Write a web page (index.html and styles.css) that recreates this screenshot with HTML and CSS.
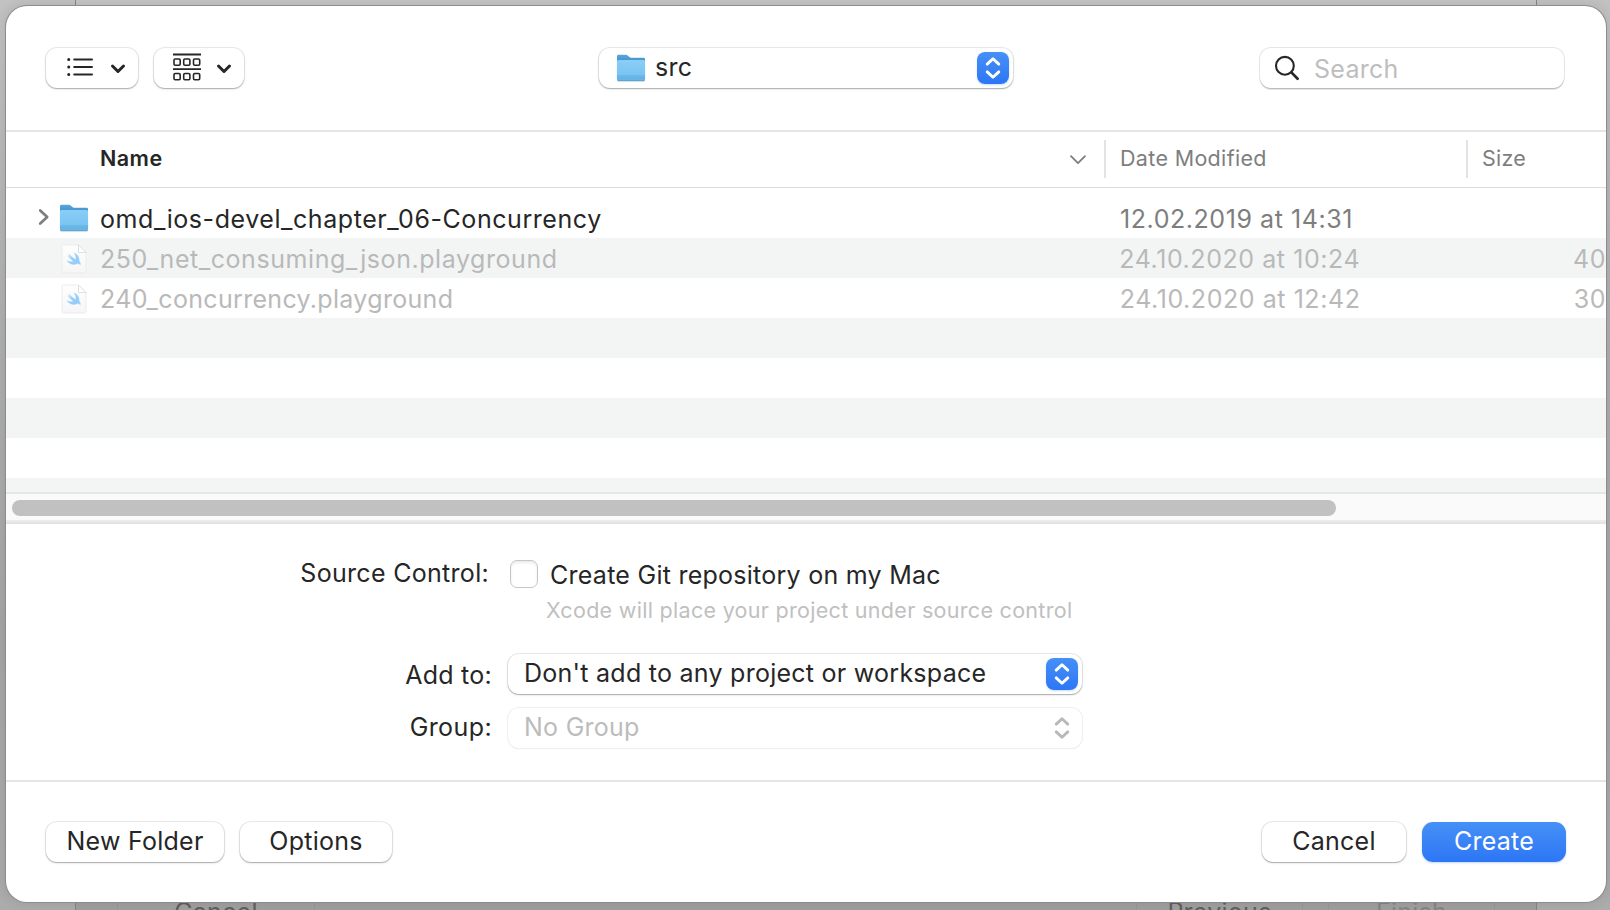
FILE: index.html
```
<!DOCTYPE html>
<html lang="en">
<head>
<meta charset="utf-8">
<title>Save</title>
<link rel="stylesheet" href="styles.css">
</head>
<body>
<svg class="defs" width="0" height="0" aria-hidden="true">
  <defs>
    <linearGradient id="folder-back" x1="0" y1="0" x2="0" y2="1"><stop offset="0" stop-color="#58a7db"/><stop offset=".3" stop-color="#3f8fc9"/></linearGradient>
    <linearGradient id="folder-front" x1="0" y1="0" x2="0" y2="1"><stop offset="0" stop-color="#8acdf7"/><stop offset=".7" stop-color="#7ac4f3"/><stop offset="1" stop-color="#66b3e4"/></linearGradient>
    <linearGradient id="page" x1="0" y1="0" x2="0" y2="1"><stop offset="0" stop-color="#fefefe"/><stop offset="1" stop-color="#f6f6f6"/></linearGradient>
  </defs>
  <symbol id="folder" viewBox="0 0 30 28">
    <path d="M1 26V2.200Q1 .8 2.400 .8H10q1 0 1.600.7l1.800 1.600q.6.6 1.600.6h12.600q1.400 0 1.400 1.400V26z" fill="url(#folder-back)"/>
    <path d="M.9 7.600Q.9 6 2.400 6H27.600q1.500 0 1.500 1.600V25.200q0 1.500-1.500 1.500H2.400q-1.500 0-1.500-1.500z" fill="url(#folder-front)"/>
    <path d="M1 22H29M1 24H29" stroke="#5aa9da" stroke-width=".7"/>
    <path d="M1.500 26.800H28.500" stroke="#4b8fbd" stroke-width=".9"/>
  </symbol>
  <symbol id="playground" viewBox="0 0 26 30">
    <path d="M1.500 1H17.500L25 8.500V27.500q0 1.500-1.500 1.500H2.500Q1 29 1 27.500V1.500z" fill="url(#page)" stroke="#e9e9e9" stroke-width=".8"/>
    <path d="M17.500 1V8.500H25z" fill="#fff" stroke="#dcdcdc" stroke-width=".9"/>
    <path d="M13.200 8.800C17 11 18.700 14 18 17.100C19.300 18.500 19.600 19.800 19.200 20.700C18 19.300 16.900 19.500 15.500 20C12 21.100 8.300 19.900 6 16.700C8.300 18 10.800 18.100 12.600 17.300C10.200 15.600 8.100 13.400 6.900 11.500C8.600 13 10 14 11.500 15C10.200 13.500 9 12 8.100 10.300C10 12.200 12.600 14.500 14.800 15.700C15.400 13.500 14.700 11 13.200 8.800z" fill="#94cdfa" stroke="#94cdfa" stroke-width=".4" stroke-linejoin="round"/>
  </symbol>
  <symbol id="chevron-down" viewBox="0 0 16 12">
    <path d="M2.500 3L8 8.500 13.500 3" fill="none" stroke="currentColor" stroke-width="3" stroke-linecap="round" stroke-linejoin="round"/>
  </symbol>
  <symbol id="updown" viewBox="0 0 16 24">
    <path d="M2.200 8.100L8 2.800l5.800 5.300M2.200 15.900L8 21.200l5.800-5.300" fill="none" stroke="currentColor" stroke-width="2.900" stroke-linecap="round" stroke-linejoin="round"/>
  </symbol>
</svg>

<div class="parent-window">
  <div class="parent-buttons">
    <span class="parent-button parent-cancel">Cancel</span>
    <span class="parent-button">Previous</span>
    <span class="parent-button parent-finish">Finish</span>
  </div>
</div>

<main class="dialog">
  <header class="toolbar">
    <button class="control view-list">
      <svg width="26" height="22" viewBox="0 0 26 22" fill="none" stroke="currentColor" stroke-width="2" stroke-linecap="round"><path d="M7.200 3.500H25M7.200 11H25M7.200 18.500H25"/><path d="M1.700 3.500h.1M1.700 11h.1M1.700 18.500h.1" stroke-width="3"/></svg>
      <svg class="chev" width="16" height="12"><use href="#chevron-down"/></svg>
    </button>
    <button class="control view-group">
      <svg width="28" height="28" viewBox="0 0 28 28" fill="none" stroke="currentColor" stroke-width="1.600"><path d="M0 1.500H28M0 16.200H28" stroke-width="1.800"/><rect x="1" y="6" width="6.200" height="6.200" rx="1.200"/><rect x="10.700" y="6" width="6.200" height="6.200" rx="1.200"/><rect x="20.500" y="6" width="6.200" height="6.200" rx="1.200"/><rect x="1" y="20.500" width="6.200" height="6.200" rx="1.200"/><rect x="10.700" y="20.500" width="6.200" height="6.200" rx="1.200"/><rect x="20.500" y="20.500" width="6.200" height="6.200" rx="1.200"/></svg>
      <svg class="chev" width="16" height="12"><use href="#chevron-down"/></svg>
    </button>
    <div class="control location">
      <svg width="30" height="28"><use href="#folder"/></svg>
      <span class="location-name">src</span>
      <span class="stepper"><svg width="16" height="24"><use href="#updown"/></svg></span>
    </div>
    <div class="control search">
      <svg width="26" height="28" viewBox="0 0 26 28" fill="none" stroke="currentColor" stroke-linecap="round"><circle cx="10.900" cy="11.800" r="8.900" stroke-width="2.100"/><path d="M17.600 18.600L23.600 24.800" stroke-width="2.700"/></svg>
      <span>Search</span>
    </div>
  </header>

  <div class="columns">
    <div class="col-name"><span>Name</span>
      <svg width="18" height="12" viewBox="0 0 18 12"><path d="M2 2.200L9 9.200 16 2.200" fill="none" stroke="#7d7d7d" stroke-width="1.800" stroke-linecap="round" stroke-linejoin="round"/></svg>
    </div>
    <div class="col-date">Date Modified</div>
    <div class="col-size">Size</div>
  </div>

  <div class="files">
    <div class="row">
      <svg class="disclosure" width="12" height="20" viewBox="0 0 12 20"><path d="M2.200 3.400L9.200 10 2.200 16.600" fill="none" stroke="#7e7e7e" stroke-width="2.700" stroke-linecap="round" stroke-linejoin="round"/></svg>
      <svg class="file-icon" width="30" height="28"><use href="#folder"/></svg>
      <span class="file-name">omd_ios-devel_chapter_06-Concurrency</span>
      <span class="file-date">12.02.2019 at 14:31</span>
    </div>
    <div class="row disabled">
      <svg class="page-icon" width="26" height="30"><use href="#playground"/></svg>
      <span class="file-name">250_net_consuming_json.playground</span>
      <span class="file-date">24.10.2020 at 10:24</span>
      <span class="file-size">40</span>
    </div>
    <div class="row disabled">
      <svg class="page-icon" width="26" height="30"><use href="#playground"/></svg>
      <span class="file-name short-name">240_concurrency.playground</span>
      <span class="file-date">24.10.2020 at 12:42</span>
      <span class="file-size">30</span>
    </div>
    <div class="row"></div>
    <div class="row"></div>
    <div class="row"></div>
    <div class="row"></div>
    <div class="row"></div>
  </div>
  <div class="scrollbar"><div class="thumb"></div></div>

  <section class="options">
    <div class="option source">
      <span class="label">Source Control:</span>
      <span class="checkbox"></span>
      <span class="check-text">Create Git repository on my Mac</span>
    </div>
    <p class="note">Xcode will place your project under source control</p>
    <div class="option">
      <span class="label">Add to:</span>
      <div class="control select"><span>Don't add to any project or workspace</span><span class="stepper"><svg width="16" height="24"><use href="#updown"/></svg></span></div>
    </div>
    <div class="option">
      <span class="label group-label">Group:</span>
      <div class="control select off"><span>No Group</span><span class="stepper"><svg width="16" height="24"><use href="#updown"/></svg></span></div>
    </div>
  </section>

  <footer class="actions">
    <button class="control new-folder">New Folder</button>
    <button class="control more">Options</button>
    <button class="control cancel">Cancel</button>
    <button class="control create">Create</button>
  </footer>
</main>
</body>
</html>
```
FILE: styles.css
```
* { box-sizing: border-box; }

body {
  margin: 0;
  width: 1610px;
  height: 910px;
  padding: 6px 4px 8px 6px;
  overflow: hidden;
  position: relative;
  background: linear-gradient(#c2c2c2, #b0b0b0 35%, #a6a6a6 70%, #acacac);
  color: #262626;
  font: 25px/30px Inter, "Liberation Sans", sans-serif;
  letter-spacing: .26px;
}

.defs { position: absolute; }
svg { display: block; flex: none; }

.parent-window {
  position: absolute;
  left: 75px;
  top: -10px;
  width: 1462px;
  height: 940px;
  padding-top: 908px;
  border: solid #858585;
  border-width: 0 1px;
  background: linear-gradient(#c5c5c5 16px, #a0a0a0 900px);
}
.parent-buttons { display: flex; padding: 0 41px; }
.parent-button {
  width: 167px;
  height: 30px;
  margin-left: 25px;
  border: solid #979797;
  border-width: 0 1px;
  color: #606060;
  text-align: center;
  line-height: 29px;
}
.parent-cancel { width: 198px; margin: 0 auto 0 0; }
.parent-finish { color: #868686; }

.dialog {
  position: relative;
  display: flex;
  flex-direction: column;
  width: 1600px;
  height: 896px;
  overflow: hidden;
  border-radius: 21px;
  background: #fff;
  box-shadow: 0 0 0 1px #8c8c8c, 0 0 14px rgba(0, 0, 0, .12);
}

.control {
  display: flex;
  align-items: center;
  height: 40px;
  padding: 0;
  border: 0;
  border-radius: 11px;
  background: #fff;
  color: #262626;
  font: inherit;
  letter-spacing: inherit;
  box-shadow: 0 0 0 1px rgba(0, 0, 0, .08), 0 1px 1px rgba(0, 0, 0, .18), 0 1px 3px rgba(0, 0, 0, .12);
}

.toolbar {
  display: flex;
  height: 126px;
  padding: 42px 42px 0 40px;
  border-bottom: 2px solid #e5e5e5;
}
.view-list { width: 92px; padding: 0 12px 3px 21px; justify-content: space-between; }
.view-group { width: 90px; margin-left: 16px; padding: 0 12px 3px 19px; justify-content: space-between; }
.chev { margin-top: 4px; }
.location { width: 414px; margin-left: 355px; padding: 0 4px 0 17px; }
.location-name { margin: -3px auto 0 9px; }
.search {
  width: 304px;
  margin-left: auto;
  padding-left: 14px;
  gap: 14px;
  box-shadow: 0 1px 0 0 #bdbdbd, 0 0 0 1px #e6e6e6, 0 2px 0 0 #e4e4e4;
}
.search span { color: #bebebe; padding-top: 2px; }

.stepper {
  display: flex;
  align-items: center;
  justify-content: center;
  width: 32px;
  height: 32px;
  border-radius: 8px;
  color: #fff;
  background: linear-gradient(#4690f7, #2d76f5);
  box-shadow: 0 1px 2px rgba(45, 118, 245, .25);
}

.columns {
  display: flex;
  height: 56px;
  padding: 8px 0;
  border-bottom: 1px solid #dcdcdc;
  color: #7e7e7e;
  font-size: 21.5px;
  line-height: 37px;
}
.col-name {
  display: flex;
  align-items: center;
  justify-content: space-between;
  width: 1098px;
  padding: 0 17px 0 94px;
  color: #262626;
  font-weight: 600;
  letter-spacing: .45px;
}
.col-name span { margin-top: -2px; }
.col-date, .col-size { height: 38px; padding-left: 14px; border-left: 2px solid #e3e3e3; }
.col-date { width: 362px; letter-spacing: .33px; }

.files { height: 304px; padding-top: 10px; overflow: hidden; }
.row { display: flex; align-items: center; height: 40px; line-height: 38px; white-space: nowrap; letter-spacing: .56px; }
.row span { padding-top: 2px; }
.row:nth-child(even) { background: #f3f5f4; }
.disclosure { margin: -2px 9px 0 32px; }
.file-icon { margin-right: 11px; }
.page-icon { margin: 2px 13px 0 55px; }
.file-name { width: 1020px; }
.short-name { letter-spacing: .32px; }
.file-date { width: 454px; color: #7e7e7e; }
.disabled { color: #b9b9b9; }
.disabled .file-date { color: #b9b9b9; }

.scrollbar {
  height: 32px;
  padding: 6px;
  border-top: 2px solid #e6e6e6;
  border-bottom: 2px solid #e3e3e3;
  background: #fafafa;
  box-shadow: inset 0 -2px #ebebeb;
}
.thumb { width: 1324px; height: 16px; border-radius: 8px; background: #c1c1c1; }

.options { height: 258px; padding-top: 36px; border-bottom: 2px solid #e5e5e5; }
.option { display: flex; align-items: flex-start; margin-bottom: 14px; }
.label { width: 486px; margin-right: 16px; padding-top: 6px; text-align: right; }
.group-label { padding-top: 4px; letter-spacing: .4px; }
.source { height: 28px; margin: 0; }
.source .label { width: 483px; margin-right: 21px; padding-top: 0; margin-top: -2px; letter-spacing: .3px; }
.checkbox {
  width: 28px;
  height: 28px;
  margin-right: 12px;
  border: 1px solid #c6c6c6;
  border-radius: 7px;
  box-shadow: inset 0 2px 3px rgba(0, 0, 0, .08);
}
.check-text { white-space: nowrap; }
.note { margin: 8px 0 29px 540px; color: #c0c0c0; font-size: 21.5px; line-height: 29px; letter-spacing: .3px; }
.select { width: 574px; padding: 0 4px 0 16px; justify-content: space-between; }
.select > span:first-child { margin-top: -2px; }
.off { color: #bcbcbc; box-shadow: 0 0 0 1px #efefef, 0 1px 1px rgba(0, 0, 0, .14); }
.off .stepper { background: none; box-shadow: none; color: #b8b8b8; }

.actions { display: flex; padding: 40px 40px 0; }
.actions .control { justify-content: center; padding-bottom: 2px; }
.new-folder { width: 178px; }
.more { width: 152px; margin-left: 16px; }
.cancel { width: 144px; margin-left: auto; }
.actions .create {
  width: 144px;
  margin-left: 16px;
  color: #fff;
  background: linear-gradient(#4690f7, #2d76f5);
  box-shadow: 0 1px 2px rgba(45, 118, 245, .3);
}
```
